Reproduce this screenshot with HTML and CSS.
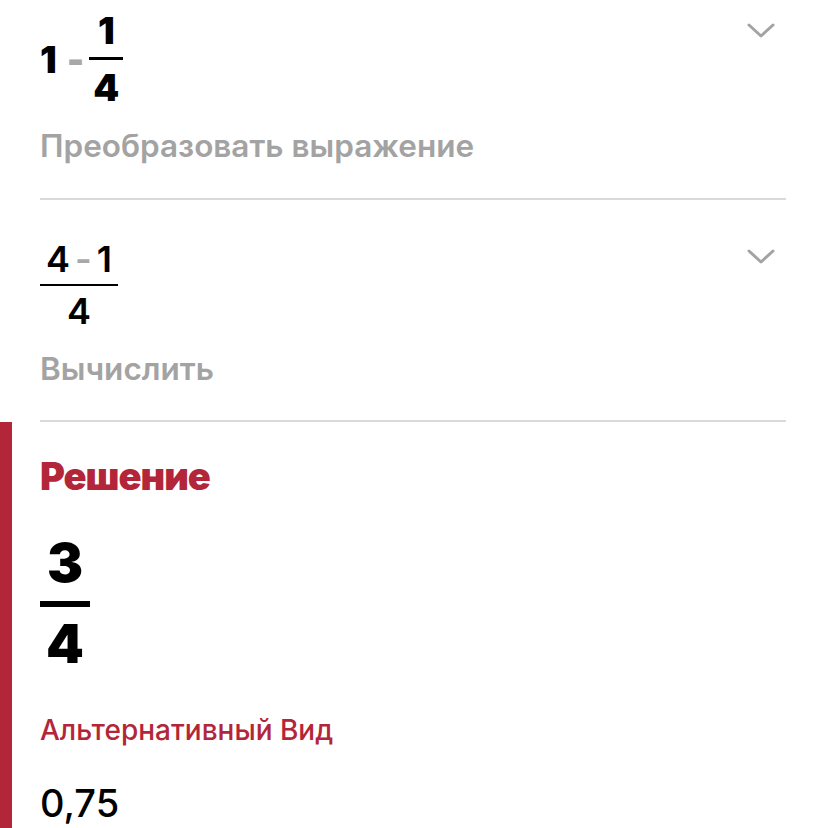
FILE: index.html
```html
<!DOCTYPE html>
<html lang="ru">
<head>
  <meta charset="UTF-8">
  <meta name="viewport" content="width=device-width, initial-scale=1.0">
  <title>Решение</title>
  <link rel="stylesheet" href="styles.css">
</head>
<body>
  <div class="step first">
    <div class="step-head">
      <div class="expr heavy">
        <span class="whole">1</span>
        <span class="op">-</span>
        <span class="frac">
          <span class="num">1</span>
          <span class="bar"></span>
          <span class="den">4</span>
        </span>
      </div>
      <svg class="chevron" width="28" height="15" viewBox="0 0 28 15">
        <path d="M2 2 L14 13 L26 2" fill="none" stroke="#a3a3a3" stroke-width="3" stroke-linecap="round" stroke-linejoin="round"/>
      </svg>
    </div>
    <div class="caption">Преобразовать выражение</div>
  </div>

  <div class="step second">
    <div class="step-head">
      <div class="expr light">
        <span class="frac">
          <span class="num">4<span class="op">-</span>1</span>
          <span class="bar"></span>
          <span class="den">4</span>
        </span>
      </div>
      <svg class="chevron" width="28" height="15" viewBox="0 0 28 15">
        <path d="M2 2 L14 13 L26 2" fill="none" stroke="#a3a3a3" stroke-width="3" stroke-linecap="round" stroke-linejoin="round"/>
      </svg>
    </div>
    <div class="caption">Вычислить</div>
  </div>

  <div class="solution">
    <div class="solution-title">Решение</div>
    <div class="expr result">
      <span class="frac">
        <span class="num">3</span>
        <span class="bar"></span>
        <span class="den">4</span>
      </span>
    </div>
    <div class="alt-title">Альтернативный Вид</div>
    <div class="alt-value">0,75</div>
  </div>
</body>
</html>
```

FILE: styles.css
```css
* { box-sizing: border-box; margin: 0; padding: 0; }

body {
  font-family: Inter, "Noto Sans", sans-serif;
  background-color: #fff;
  color: #000;
  overflow: hidden;
}

.step {
  margin: 0 40px;
  border-bottom: 2px solid #dadada;
}

.step.first {
  padding: 13px 0 33px;
}

.step.second {
  padding: 41px 0 32px;
}

.step-head {
  display: flex;
  justify-content: space-between;
  align-items: flex-start;
}

.chevron {
  margin-right: 11px;
}

.first .chevron { margin-top: 10px; }
.second .chevron { margin-top: 8px; }

.expr {
  display: flex;
  align-items: center;
}

.frac {
  display: flex;
  flex-direction: column;
  align-items: center;
}

.heavy {
  font-size: 37px;
  font-weight: 900;
  line-height: 36px;
}

.heavy .op {
  color: #a8a8a8;
  margin: 0 5px 0 10px;
}

.heavy .bar {
  width: 34px;
  height: 3px;
  margin: 8px 0 10px;
  background-color: #000;
}

.light {
  font-size: 36px;
  font-weight: 600;
  line-height: 36px;
}

.light .op {
  color: #a8a8a8;
  margin: 0 5px;
}

.light .bar {
  width: 78px;
  height: 2px;
  margin: 7px 0;
  background-color: #000;
}

.caption {
  margin-top: 21px;
  font-size: 31.5px;
  font-weight: 600;
  line-height: 38px;
  color: #a3a3a3;
}

.solution {
  border-left: 12px solid #b3263a;
  padding: 34px 0 0 28px;
  height: 408px;
}

.solution-title {
  font-size: 38px;
  font-weight: 900;
  line-height: 40px;
  letter-spacing: -1px;
  color: #b3263a;
}

.result {
  margin-top: 40px;
  font-size: 54px;
  font-weight: 900;
  line-height: 53px;
}

.result .frac {
  align-items: center;
  width: 50px;
}

.result .bar {
  width: 50px;
  height: 6px;
  margin: 12px 0 10px;
  background-color: #000;
}

.alt-title {
  margin-top: 42px;
  font-size: 28px;
  font-weight: 500;
  line-height: 36px;
  color: #b3263a;
}

.alt-value {
  margin-top: 33px;
  font-size: 38px;
  font-weight: 500;
  line-height: 44px;
}
```
